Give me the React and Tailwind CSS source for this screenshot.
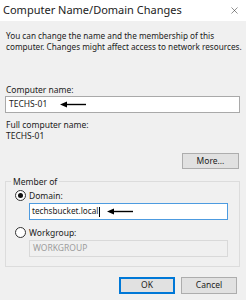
import { X } from "lucide-react";

function Arrow({ className }) {
  return (
    <svg width="26" height="7" viewBox="0 0 26 7" className={className}>
      <polygon points="0,3.5 7,0.5 7,6.5" fill="#000" />
      <rect x="6" y="2.8" width="20" height="1.4" fill="#000" />
    </svg>
  );
}

function Radio({ checked }) {
  return (
    <span className="w-[11px] h-[11px] rounded-full border border-[#333] bg-white flex items-center justify-center shrink-0">
      {checked && <span className="w-[5px] h-[5px] rounded-full bg-[#111]" />}
    </span>
  );
}

export default function App() {
  return (
    <div
      className="w-[246px] h-[300px] bg-[#f0f0f0] overflow-hidden text-[#1b1b1b]"
      style={{ fontFamily: '"Noto Sans", "Open Sans", sans-serif' }}
    >
      {/* title bar */}
      <div className="h-[21px] bg-white flex items-center justify-between pl-[3px] pr-[6px]">
        <span className="text-[11px] text-[#222]">Computer Name/Domain Changes</span>
        <X size={11} strokeWidth={1.2} className="text-[#333]" />
      </div>

      <div className="flex flex-col">
        <p className="mt-[9px] mx-[6px] text-[8.2px] leading-[11px] whitespace-nowrap">
          You can change the name and the membership of this
          <br />
          computer. Changes might affect access to network resources.
        </p>

        <div className="mt-[32px] mx-[6px] text-[8.5px] leading-[11px]">Computer name:</div>
        <div className="mt-[1px] ml-[5px] w-[235px] h-[17px] bg-white border border-[#a9a9a9] flex items-center pl-[3px]">
          <span className="text-[8.5px]">TECHS-01</span>
          <Arrow className="ml-[13px]" />
        </div>

        <div className="mt-[6px] mx-[6px] text-[8.5px] leading-[11px]">Full computer name:</div>
        <div className="mx-[6px] text-[8.5px] leading-[11px]">TECHS-01</div>

        <div className="mt-[12px] flex justify-end pr-[7px]">
          <button className="w-[57px] h-[16px] bg-[#e1e1e1] border border-[#adadad] text-[8.5px] leading-none">
            More...
          </button>
        </div>

        <fieldset className="mt-[7px] ml-[5px] w-[235px] border border-[#dcdcdc] pb-[9px]">
          <legend className="ml-[5px] px-[2px] text-[8.5px] leading-[11px]">Member of</legend>
          <div className="mt-[3px] ml-[9px] flex items-center gap-[3px] h-[11px]">
            <Radio checked />
            <span className="text-[8.5px] leading-[11px]">Domain:</span>
          </div>
          <div className="mt-[2px] ml-[23px] w-[199px] h-[17px] bg-white border border-[#4d9be0] flex items-center pl-[2px]">
            <span className="text-[8.2px]">techsbucket.local</span>
            <span className="ml-[1px] w-px h-[10px] bg-black" />
            <Arrow className="ml-[7px]" />
          </div>
          <div className="mt-[7px] ml-[9px] flex items-center gap-[3px] h-[11px]">
            <Radio />
            <span className="text-[8.5px] leading-[11px]">Workgroup:</span>
          </div>
          <div className="mt-[2px] ml-[23px] w-[199px] h-[17px] bg-[#f0f0f0] border border-[#d9d9d9] flex items-center pl-[3px]">
            <span className="text-[8.5px] text-[#9c9c9c]">WORKGROUP</span>
          </div>
        </fieldset>

        <div className="mt-[10px] flex justify-end gap-[6px] pr-[9px]">
          <button className="w-[56px] h-[17px] bg-[#e1e1e1] border-2 border-[#0078d7] text-[8.5px] leading-none">
            OK
          </button>
          <button className="w-[56px] h-[17px] bg-[#e1e1e1] border border-[#adadad] text-[8.5px] leading-none">
            Cancel
          </button>
        </div>
      </div>
    </div>
  );
}
